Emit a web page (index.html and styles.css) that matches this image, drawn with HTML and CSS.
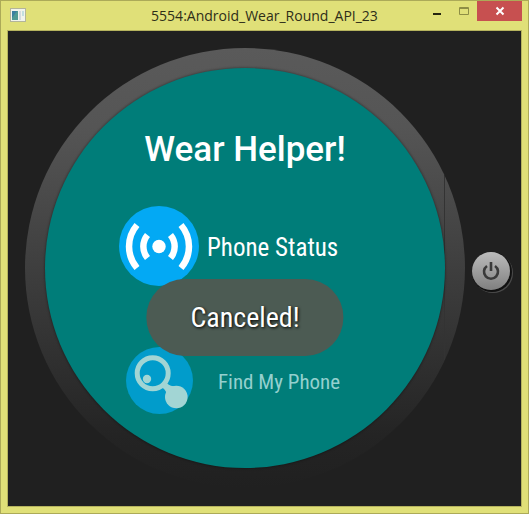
FILE: index.html
```html
<!DOCTYPE html>
<html lang="en">
<head>
<meta charset="utf-8">
<title>5554:Android_Wear_Round_API_23</title>
<link rel="stylesheet" href="styles.css">
</head>
<body>
<div class="window">
  <header class="titlebar">
    <svg class="app-icon" viewBox="0 0 16 14" aria-hidden="true">
      <rect x="0.5" y="0.5" width="15" height="13" fill="#f2f4ec" stroke="#b3b59a"/>
      <rect x="2" y="3" width="6" height="9" fill="#4f9a94"/>
      <path d="M2 3h5L2 10z" fill="#3b7fa0"/>
      <rect x="9" y="3" width="2" height="9" fill="#d5dbe0"/>
      <path d="M12 3h2v5h-2z" fill="#c3dfe0"/>
    </svg>
    <span class="title">5554:Android_Wear_Round_API_23</span>
    <div class="controls">
      <button class="control" type="button" aria-label="Minimize">
        <svg viewBox="0 0 12 10"><rect x="2" y="7" width="8" height="2" fill="#25250f"/></svg>
      </button>
      <button class="control" type="button" aria-label="Maximize">
        <svg viewBox="0 0 12 10"><path d="M1.5 1.5h9v7h-9zM1 2.5h10" fill="none" stroke="#8e8e45"/></svg>
      </button>
      <button class="control close" type="button" aria-label="Close">
        <svg viewBox="0 0 12 10"><path d="M2.5 1.5l7 7M9.5 1.5l-7 7" fill="none" stroke="#fff" stroke-width="2"/></svg>
      </button>
    </div>
  </header>
  <main class="stage">
    <div class="watch">
      <div class="screen">
        <h1>Wear Helper!</h1>
        <button class="item" type="button">
          <svg class="item-icon" viewBox="0 0 80 80" aria-hidden="true">
            <circle cx="40" cy="40" r="40" fill="#03a9f4"/>
            <circle cx="40" cy="40.5" r="6.7" fill="#fff"/>
            <g fill="none" stroke="#fff" stroke-width="6.5">
              <path d="M28.500 29A18 18 0 0 0 28.500 52M51.500 29A18 18 0 0 1 51.500 52"/>
              <path d="M18 19A33 33 0 0 0 18 62M62 19A33 33 0 0 1 62 62"/>
            </g>
          </svg>
          <span class="label">Phone Status</span>
        </button>
        <button class="item faded" type="button">
          <svg class="item-icon" viewBox="0 0 67 67" aria-hidden="true">
            <circle cx="33.5" cy="33.5" r="33.5" fill="#019ccb"/>
            <circle cx="26.7" cy="26.3" r="15.5" fill="none" stroke="#a2d5d4" stroke-width="5"/>
            <circle cx="21" cy="32" r="4.2" fill="#a2d5d4"/>
            <path d="M34 39l5-5q4 6 10 5l-8 11q1-6-7-11z" fill="#a2d5d4"/>
            <circle cx="50.3" cy="50" r="11.3" fill="#a2d5d4"/>
          </svg>
          <span class="label">Find My Phone</span>
        </button>
        <div class="toast" role="status">Canceled!</div>
      </div>
    </div>
    <button class="power" type="button" aria-label="Power">
      <svg viewBox="0 0 20 20" fill="none">
        <path d="M6 5a7 7 0 1 0 8 0M10 1v9" stroke="#3a3a3a" stroke-width="2.6"/>
      </svg>
    </button>
  </main>
</div>
</body>
</html>
```
FILE: styles.css
```css
* {
  box-sizing: border-box;
}

body {
  margin: 0;
  background: #e0e078;
}

button {
  border: 0;
  padding: 0;
  margin: 0;
  background: none;
  color: inherit;
  font: inherit;
}

.window {
  display: flex;
  flex-direction: column;
  min-height: 100vh;
  padding: 0 6px 6px;
  border: 1px solid #acaa58;
  background: #e0e078;
}

.titlebar {
  display: grid;
  grid-template-columns: 1fr auto 1fr;
  height: 29px;
}

.app-icon {
  width: 16px;
  height: 14px;
  margin: 7px 0 0 3px;
}

.title {
  color: #2e2e18;
  font: 14px/30px "Open Sans", "Noto Sans", sans-serif;
}

.controls {
  display: flex;
  justify-content: flex-end;
}

.control {
  display: flex;
  align-items: center;
  justify-content: center;
  width: 27px;
  height: 20px;
}

.control svg {
  width: 12px;
  height: 10px;
}

.control.close {
  width: 45px;
  background: #c75050;
}

.stage {
  display: flex;
  flex: 1;
  align-items: center;
  gap: 7px;
  padding: 16px 10px 18px 17px;
  border: 1px solid #b5b35e;
  background: #202020;
}

.watch {
  flex: 0 1 440px;
  aspect-ratio: 1;
  padding: 20px;
  border-radius: 50%;
  background:
    linear-gradient(#333, #333) right 20px center / 1px 42% no-repeat,
    linear-gradient(#5a5a5a, #555 18%, #444 42%, #363636 62%, #242424 88%, #202020);
}

.screen {
  position: relative;
  height: 100%;
  border-radius: 50%;
  background: #007d79;
  box-shadow: 0 0 2px 1px rgba(0, 0, 0, 0.25);
  color: #fff;
  font-family: "Roboto Condensed", "Liberation Sans Narrow", Roboto, sans-serif;
}

h1 {
  margin: 0;
  padding-top: 62px;
  font: 500 35px/40px Roboto, sans-serif;
  text-align: center;
}

.item {
  display: flex;
  align-items: center;
  gap: 8px;
  margin: 36px 0 0 74px;
  font-size: 25px;
  line-height: 32px;
  white-space: nowrap;
}

.item-icon {
  width: 80px;
  height: 80px;
}

.label {
  padding-top: 4px;
}

.item.faded {
  gap: 25px;
  margin: 61px 0 0 81px;
  color: #94d0ce;
  font-size: 21px;
}

.faded .item-icon {
  width: 67px;
  height: 67px;
}

.toast {
  position: absolute;
  top: 211px;
  left: 50%;
  padding: 20px 44px;
  border-radius: 38px;
  background: #4c5b53;
  font-size: 28px;
  line-height: 37px;
  text-shadow: 1px 1px 3px #000;
  white-space: nowrap;
  transform: translateX(-50%);
}

.power {
  display: flex;
  flex: none;
  align-items: center;
  justify-content: center;
  width: 38px;
  height: 38px;
  margin-top: 6px;
  border-radius: 50%;
  background: linear-gradient(#bcbcbc, #808080);
  box-shadow: 1px 1px 0 1px #111, 2px 2px 0 1px #4a4a4a;
}

.power svg {
  width: 20px;
  height: 20px;
}
```
